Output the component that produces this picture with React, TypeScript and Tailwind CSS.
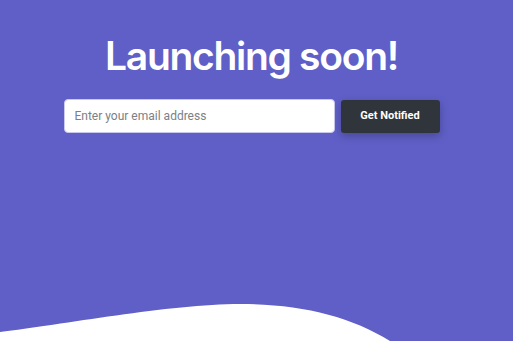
import React from "react";

export default function App() {
  return (
    <div className="flex h-screen w-full flex-col overflow-hidden bg-[#5f5fc7] font-['Inter','Roboto',sans-serif]">
      <div className="flex flex-col items-center pr-[10px] pt-8">
        <h1 className="text-[39px] font-semibold leading-[48px] tracking-[-1.3px] text-white">
          Launching soon!
        </h1>
        <form
          className="mt-[19px] flex items-center gap-[6px]"
          onSubmit={(e) => e.preventDefault()}
        >
          <input
            type="email"
            placeholder="Enter your email address"
            className="h-[34px] w-[271px] rounded-[4px] border border-[#c9c9ee] bg-white px-[10px] font-['Roboto',sans-serif] text-[12px] text-gray-700 outline-none placeholder:text-[#7b7f86]"
          />
          <button
            type="submit"
            className="h-[33px] w-[99px] rounded-[3px] bg-[#30353c] font-['Roboto',sans-serif] text-[11px] font-bold text-white shadow-[0_3px_8px_rgba(0,0,0,0.25)]"
          >
            Get Notified
          </button>
        </form>
      </div>
      <svg
        className="mt-auto block shrink-0"
        width="513"
        height="40"
        viewBox="0 0 513 40"
        preserveAspectRatio="none"
      >
        <path d="M0 31 C 60 24, 170 3, 240 3 C 300 3, 350 15, 390 40 L 0 40 Z" fill="#ffffff" />
      </svg>
    </div>
  );
}
